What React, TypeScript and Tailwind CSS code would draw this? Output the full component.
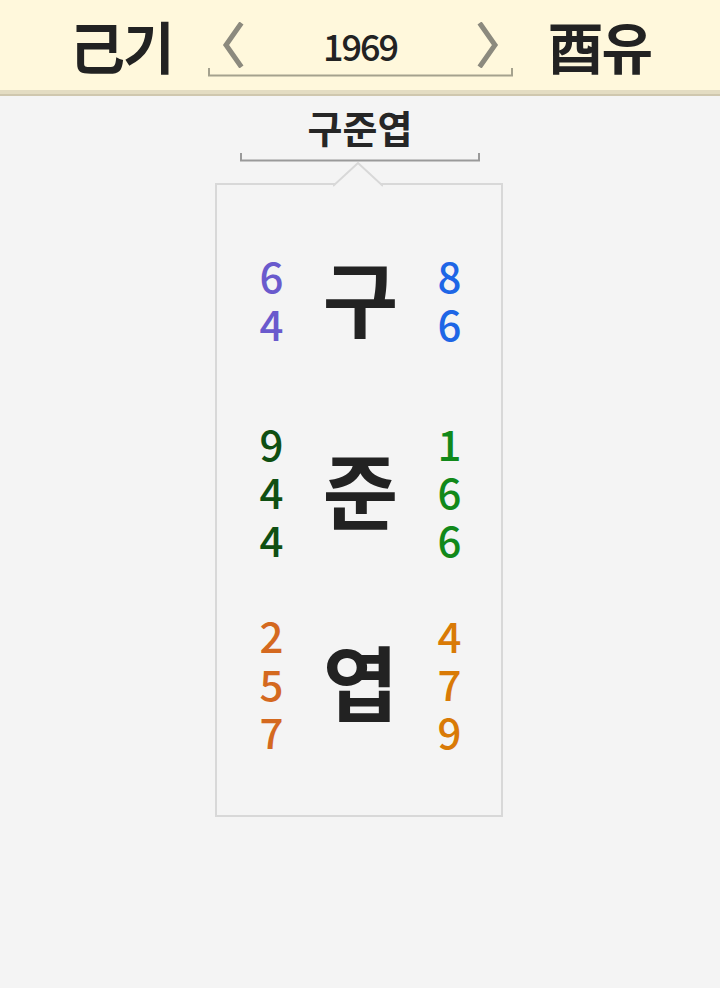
import React from 'react';

const FONT = { fontFamily: '"Noto Sans CJK KR", "Noto Sans", sans-serif' };

type Row = { char: string; left: string[]; right: string[]; leftColor: string; rightColor: string };

const rows: Row[] = [
  { char: '구', left: ['6', '4'], right: ['8', '6'], leftColor: 'text-[#6a5acd]', rightColor: 'text-[#1e66e6]' },
  { char: '준', left: ['9', '4', '4'], right: ['1', '6', '6'], leftColor: 'text-[#0f4f12]', rightColor: 'text-[#11891a]' },
  { char: '엽', left: ['2', '5', '7'], right: ['4', '7', '9'], leftColor: 'text-[#d4691f]', rightColor: 'text-[#d97a06]' },
];

const Chevron = ({ dir }: { dir: 'left' | 'right' }) => (
  <svg width="26" height="46" viewBox="0 0 26 46" fill="none">
    <path
      d={dir === 'left' ? 'M20 3 L6 23 L20 43' : 'M6 3 L20 23 L6 43'}
      stroke="#8c8a7e"
      strokeWidth="5"
      strokeLinecap="square"
    />
  </svg>
);

const Bracket = ({ width, color }: { width: number; color: string }) => (
  <svg width={width} height="9" viewBox={`0 0 ${width} 9`} fill="none">
    <path d={`M1 0 V7.5 H${width - 1} V0`} stroke={color} strokeWidth="2" />
  </svg>
);

const NumberCol = ({ nums, color }: { nums: string[]; color: string }) => (
  <div className={`flex flex-col items-center w-[30px] text-[42px] font-medium leading-[48px] ${color}`}>
    {nums.map((n, i) => (
      <span key={i} className="h-[48px]">{n}</span>
    ))}
  </div>
);

export default function App() {
  return (
    <div className="w-[720px] h-[988px] bg-[#f4f4f4] text-[#222]" style={FONT}>
      <header className="h-[96px] bg-[#fff8dc] border-b-[6px] border-[#e3dcc2] relative">
        <div className="h-[90px] flex items-center justify-center gap-[35px]">
          <span className="text-[56px] font-bold leading-none tracking-[-2px]">己기</span>
          <div className="flex flex-col items-center pt-[8px]">
            <div className="flex items-center w-[305px] justify-between px-[12px]">
              <Chevron dir="left" />
              <span className="text-[36px] font-medium leading-none tracking-[-2px]">1969</span>
              <Chevron dir="right" />
            </div>
            <Bracket width={305} color="#a5a28e" />
          </div>
          <span className="text-[56px] font-bold leading-none tracking-[-2px]">酉유</span>
        </div>
        <div className="absolute left-0 right-0 bottom-[-6px] h-[2px] bg-[#cfc7ae]" />
      </header>

      <div className="flex flex-col items-center pt-[5px]">
        <span className="text-[38px] font-bold leading-[52px] text-[#262626]">구준엽</span>
        <Bracket width={240} color="#9a9a9a" />

        <div className="relative mt-[21px] ml-[-3px] w-[288px] h-[634px] border-2 border-[#d8d8d8] pt-[18px]">
          <svg
            className="absolute left-[116px] top-[-23px]"
            width="50"
            height="26"
            viewBox="0 0 50 26"
            fill="none"
          >
            <path d="M0 24 L25 1 L50 24 Z" fill="#f4f4f4" />
            <path d="M0 24 L25 1 L50 24" stroke="#d8d8d8" strokeWidth="2" />
          </svg>
          {rows.map((r) => (
            <div key={r.char} className="h-[192px] pl-[4px] flex items-center justify-center gap-[33px]">
              <NumberCol nums={r.left} color={r.leftColor} />
              <span className="w-[82px] mb-[6px] text-center text-[82px] font-bold leading-none">{r.char}</span>
              <NumberCol nums={r.right} color={r.rightColor} />
            </div>
          ))}
        </div>
      </div>
    </div>
  );
}
